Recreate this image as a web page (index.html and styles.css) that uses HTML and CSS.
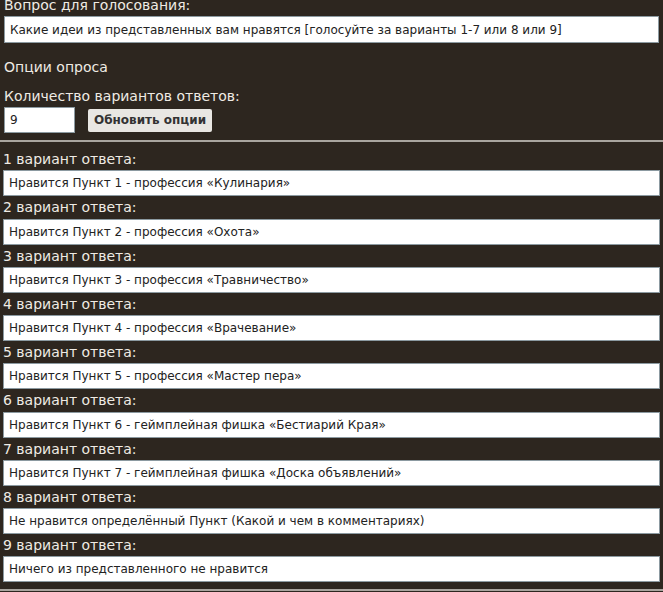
FILE: index.html
```html
<!DOCTYPE html>
<html lang="ru">
<head>
    <meta charset="UTF-8">
    <title>Опрос</title>
    <link rel="stylesheet" href="styles.css">
</head>
<body>
    <div class="poll-form">
        <label class="caption first">Вопрос для голосования:</label>
        <input class="text-field" type="text" value="Какие идеи из представленных вам нравятся [голосуйте за варианты 1-7 или 8 или 9]">

        <div class="section-title">Опции опроса</div>

        <label class="caption">Количество вариантов ответов:</label>
        <div class="count-row">
            <input class="count-field" type="text" value="9">
            <button class="update-btn">Обновить опции</button>
        </div>
    </div>

    <hr class="divider">

    <div class="answers">
        <label class="caption">1 вариант ответа:</label>
        <input class="text-field" type="text" value="Нравится Пункт 1 - профессия «Кулинария»">
        <label class="caption">2 вариант ответа:</label>
        <input class="text-field" type="text" value="Нравится Пункт 2 - профессия «Охота»">
        <label class="caption">3 вариант ответа:</label>
        <input class="text-field" type="text" value="Нравится Пункт 3 - профессия «Травничество»">
        <label class="caption">4 вариант ответа:</label>
        <input class="text-field" type="text" value="Нравится Пункт 4 - профессия «Врачевание»">
        <label class="caption">5 вариант ответа:</label>
        <input class="text-field" type="text" value="Нравится Пункт 5 - профессия «Мастер пера»">
        <label class="caption">6 вариант ответа:</label>
        <input class="text-field" type="text" value="Нравится Пункт 6 - геймплейная фишка «Бестиарий Края»">
        <label class="caption">7 вариант ответа:</label>
        <input class="text-field" type="text" value="Нравится Пункт 7 - геймплейная фишка «Доска объявлений»">
        <label class="caption">8 вариант ответа:</label>
        <input class="text-field" type="text" value="Не нравится определённый Пункт (Какой и чем в комментариях)">
        <label class="caption">9 вариант ответа:</label>
        <input class="text-field" type="text" value="Ничего из представленного не нравится">
    </div>

    <hr class="divider">
</body>
</html>
```

FILE: styles.css
```css
body {
    margin: 0;
    background: #2d261f;
    color: #efebe4;
    font-family: "DejaVu Sans", Verdana, sans-serif;
    font-size: 14px;
    overflow: hidden;
}
.poll-form {
    padding: 0 4px;
}
.caption {
    display: block;
    height: 22px;
    line-height: 22px;
}
.caption.first {
    margin-top: -6px;
}
.text-field {
    display: block;
    box-sizing: border-box;
    width: 100%;
    height: 27px;
    margin: 0;
    padding: 0 5px;
    border: 1px solid #8c9aa1;
    background: #fff;
    color: #222;
    font-family: "DejaVu Sans", Verdana, sans-serif;
    font-size: 12px;
}
.section-title {
    margin-top: 13px;
    line-height: 22px;
}
.section-title + .caption {
    margin-top: 7px;
}
.count-row {
    display: flex;
    align-items: center;
    gap: 13px;
}
.count-field {
    box-sizing: border-box;
    width: 71px;
    height: 26px;
    margin: 0;
    padding: 0 5px;
    border: 1px solid #8c9aa1;
    font-family: "DejaVu Sans", Verdana, sans-serif;
    font-size: 12px;
    color: #222;
}
.update-btn {
    height: 23px;
    padding: 0 6px;
    border: none;
    border-radius: 2px;
    background: #e9e7e3;
    color: #333;
    font-family: "DejaVu Sans", Verdana, sans-serif;
    font-size: 12px;
    font-weight: bold;
}
.divider {
    margin: 7px 0 6px;
    border: none;
    border-top: 2px solid #a9a59f;
}
.answers {
    padding: 0 3px;
}
.answers .caption {
    height: 22.25px;
    line-height: 22px;
}
.answers .text-field {
    height: 26px;
}
```
